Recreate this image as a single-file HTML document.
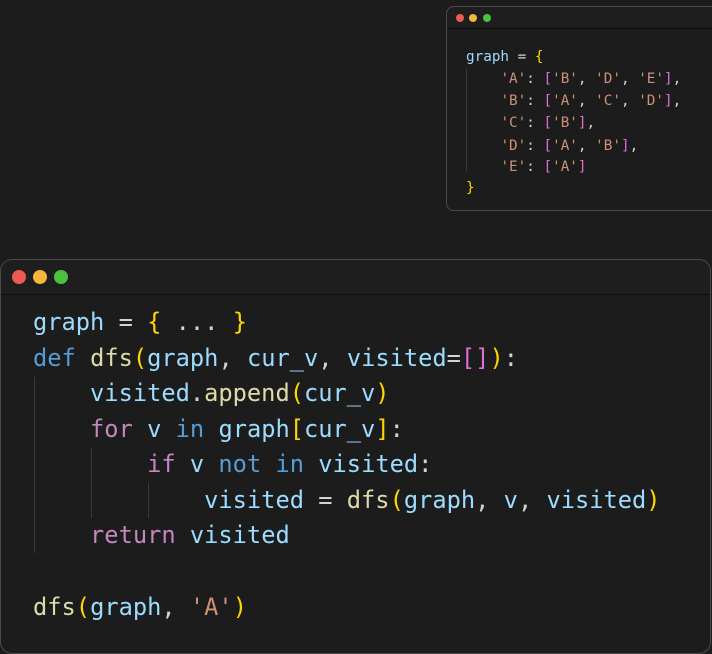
<!DOCTYPE html>
<html><head><style>
body{margin:0;width:712px;height:654px;background:#1c1c1c;position:relative;overflow:hidden;font-family:"DejaVu Sans Mono","Liberation Mono",monospace}
.win{position:absolute;background:#1c1c1c;border:1px solid #4a4a4a;box-sizing:border-box}
.bar{position:absolute;left:0;right:0;top:0;border-bottom:1px solid #0e0e0e;background:#1e1e1e}
.dot{position:absolute;border-radius:50%}
.l{position:absolute;white-space:pre;line-height:1}
.g{position:absolute;width:1px;background:#3a3a3a}
.v{color:#9cdcfe}.k{color:#569cd6}.f{color:#dcdcaa}.y{color:#ffd700}.p{color:#da70d6}.s{color:#ce9178}.c{color:#c586c0}.w{color:#d4d4d4}
</style></head><body>
<div class="win" style="left:446px;top:6px;width:280px;height:205px;border-radius:8px">
 <div class="bar" style="height:21px;border-radius:8px 8px 0 0"></div>
 <div class="dot" style="left:9px;top:7px;width:8px;height:8px;background:#ed5a52"></div>
 <div class="dot" style="left:22px;top:7px;width:8px;height:8px;background:#f4b53a"></div>
 <div class="dot" style="left:36px;top:7px;width:8px;height:8px;background:#4cc13f"></div>
</div>
<div class="g" style="left:466px;top:69px;height:103px"></div>
<div style="font-size:14.3px">
<div class="l v" style="left:466px;top:50px">graph <span class="w">=</span> <span class="y">{</span></div>
<div class="l" style="left:466px;top:72px">    <span class="s">'A'</span><span class="w">:</span> <span class="p">[</span><span class="s">'B'</span><span class="w">,</span> <span class="s">'D'</span><span class="w">,</span> <span class="s">'E'</span><span class="p">]</span><span class="w">,</span></div>
<div class="l" style="left:466px;top:94px">    <span class="s">'B'</span><span class="w">:</span> <span class="p">[</span><span class="s">'A'</span><span class="w">,</span> <span class="s">'C'</span><span class="w">,</span> <span class="s">'D'</span><span class="p">]</span><span class="w">,</span></div>
<div class="l" style="left:466px;top:116px">    <span class="s">'C'</span><span class="w">:</span> <span class="p">[</span><span class="s">'B'</span><span class="p">]</span><span class="w">,</span></div>
<div class="l" style="left:466px;top:139px">    <span class="s">'D'</span><span class="w">:</span> <span class="p">[</span><span class="s">'A'</span><span class="w">,</span> <span class="s">'B'</span><span class="p">]</span><span class="w">,</span></div>
<div class="l" style="left:466px;top:160px">    <span class="s">'E'</span><span class="w">:</span> <span class="p">[</span><span class="s">'A'</span><span class="p">]</span></div>
<div class="l y" style="left:466px;top:181px">}</div>
</div>

<div class="win" style="left:0;top:259px;width:711px;height:395px;border-radius:12px">
 <div class="bar" style="height:34px;border-radius:12px 12px 0 0"></div>
 <div class="dot" style="left:11px;top:10px;width:14px;height:14px;background:#ed5a52"></div>
 <div class="dot" style="left:32px;top:10px;width:14px;height:14px;background:#f4b53a"></div>
 <div class="dot" style="left:53px;top:10px;width:14px;height:14px;background:#4cc13f"></div>
</div>
<div class="g" style="left:34px;top:377px;height:176px"></div>
<div class="g" style="left:91px;top:448px;height:70px"></div>
<div class="g" style="left:148px;top:483px;height:35px"></div>
<div style="font-size:23.7px">
<div class="l v" style="left:33px;top:311px">graph <span class="w">=</span> <span class="y">{</span> <span class="w">...</span> <span class="y">}</span></div>
<div class="l" style="left:33px;top:347px"><span class="k">def</span> <span class="f">dfs</span><span class="y">(</span><span class="v">graph</span><span class="w">,</span> <span class="v">cur_v</span><span class="w">,</span> <span class="v">visited</span><span class="w">=</span><span class="p">[]</span><span class="y">)</span><span class="w">:</span></div>
<div class="l" style="left:33px;top:382px">    <span class="v">visited</span><span class="w">.</span><span class="f">append</span><span class="y">(</span><span class="v">cur_v</span><span class="y">)</span></div>
<div class="l" style="left:33px;top:418px">    <span class="c">for</span> <span class="v">v</span> <span class="k">in</span> <span class="v">graph</span><span class="y">[</span><span class="v">cur_v</span><span class="y">]</span><span class="w">:</span></div>
<div class="l" style="left:33px;top:453px">        <span class="c">if</span> <span class="v">v</span> <span class="k">not</span> <span class="k">in</span> <span class="v">visited</span><span class="w">:</span></div>
<div class="l" style="left:33px;top:489px">            <span class="v">visited</span> <span class="w">=</span> <span class="f">dfs</span><span class="y">(</span><span class="v">graph</span><span class="w">,</span> <span class="v">v</span><span class="w">,</span> <span class="v">visited</span><span class="y">)</span></div>
<div class="l" style="left:33px;top:524px">    <span class="c">return</span> <span class="v">visited</span></div>
<div class="l" style="left:33px;top:596px"><span class="f">dfs</span><span class="y">(</span><span class="v">graph</span><span class="w">,</span> <span class="s">'A'</span><span class="y">)</span></div>
</div>
</body></html>
